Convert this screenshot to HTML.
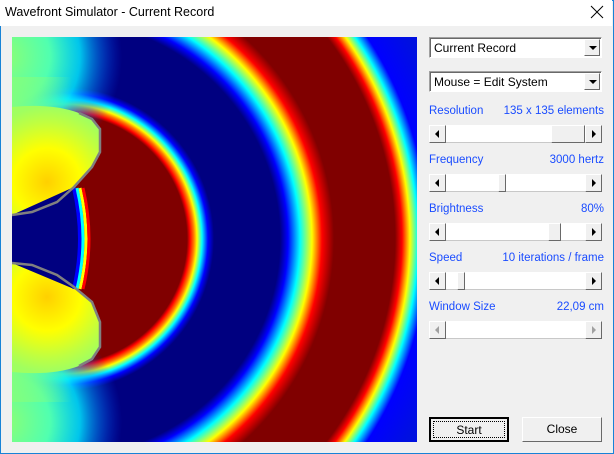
<!DOCTYPE html>
<html><head><meta charset="utf-8"><style>
*{margin:0;padding:0;box-sizing:border-box}
body{width:614px;height:454px;background:#f0f0f0;font-family:"Liberation Sans",sans-serif;font-size:12px;position:relative;overflow:hidden}
.win{position:absolute;left:0;top:0;width:614px;height:454px;border:1px solid #1883d7;background:#f0f0f0}
.title{position:absolute;left:0;top:0;width:612px;height:26px;background:#fff}
.title span{position:absolute;left:5px;top:5px;font-size:12.5px;color:#000}
.x{position:absolute;left:590px;top:5px}
.abs{position:absolute}
.combo{position:absolute;left:429px;width:173px;height:21px;background:#fff;border:1px solid;border-color:#a0a0a0 #fff #fff #a0a0a0;box-shadow:inset 1px 1px 0 #696969}
.combo span{position:absolute;left:4px;top:3px;font-size:12px}
.dd{position:absolute;right:1px;top:1px;width:16px;height:17px;background:#f0f0f0;border:1px solid;border-color:#fff #696969 #696969 #fff}
.dd:after{content:"";position:absolute;left:4px;top:6px;border-left:4px solid transparent;border-right:4px solid transparent;border-top:4px solid #000}
.lbl{position:absolute;left:429px;color:#1a4cff;font-size:11.5px}
.val{position:absolute;right:10px;color:#1a4cff;font-size:11.5px}
.sb{position:absolute;left:429px;width:173px;height:18px;background:#fff;border-bottom:1px solid #c8c8c8}
.btn{position:absolute;top:0;width:17px;height:18px;background:#f0f0f0;border:1px solid;border-color:#fff #696969 #696969 #fff}
.bl{left:0}.br{right:0}
.bl:after{content:"";position:absolute;left:5px;top:4px;border-top:4px solid transparent;border-bottom:4px solid transparent;border-right:4px solid #000}
.br:after{content:"";position:absolute;left:6px;top:4px;border-top:4px solid transparent;border-bottom:4px solid transparent;border-left:4px solid #000}
.dis:after{border-right-color:#a0a0a0;border-left-color:#a0a0a0}
.th{position:absolute;top:0;height:18px;background:#f0f0f0;border:1px solid;border-color:#fff #696969 #696969 #fff}
.pb{position:absolute;top:417px;height:25px;background:#f0f0f0;border:1px solid;border-color:#fff #696969 #696969 #fff;text-align:center;line-height:22px;font-size:12px}
</style></head><body>
<div class="win"></div>
<div class="title"><span>Wavefront Simulator - Current Record</span>
<svg class="x" width="14" height="14" viewBox="0 0 14 14"><path d="M1 1L13 13M13 1L1 13" stroke="#000" stroke-width="1"/></svg></div>

<svg class="abs" style="left:12px;top:37px" width="405" height="405" viewBox="0 0 405 405">
<defs>
<radialGradient id="w" gradientUnits="userSpaceOnUse" cx="50" cy="202" r="400">
<stop offset="0" stop-color="#800000"/><stop offset=".3125" stop-color="#800000"/>
<stop offset=".32" stop-color="#ff0000"/><stop offset=".33" stop-color="#ff8000"/>
<stop offset=".3375" stop-color="#ffff00"/><stop offset=".35" stop-color="#00ffff"/>
<stop offset=".365" stop-color="#0000ff"/><stop offset=".38" stop-color="#000080"/>
<stop offset=".545" stop-color="#000080"/><stop offset=".565" stop-color="#0000ff"/>
<stop offset=".595" stop-color="#00ffff"/><stop offset=".625" stop-color="#ffff00"/>
<stop offset=".65" stop-color="#ff0000"/><stop offset=".68" stop-color="#800000"/>
<stop offset=".8325" stop-color="#800000"/><stop offset=".85" stop-color="#ff0000"/>
<stop offset=".87" stop-color="#ffff00"/><stop offset=".89" stop-color="#00ffff"/>
<stop offset=".915" stop-color="#0000ff"/><stop offset="1" stop-color="#0010e0"/>
</radialGradient>
<radialGradient id="c1" gradientUnits="userSpaceOnUse" cx="-10" cy="20" r="120">
<stop offset="0" stop-color="#90ff70"/><stop offset=".4" stop-color="#50ffb0"/><stop offset=".65" stop-color="#00e8ff" stop-opacity=".85"/><stop offset=".85" stop-color="#0080ff" stop-opacity=".4"/><stop offset="1" stop-color="#0040ff" stop-opacity="0"/>
</radialGradient>
<radialGradient id="c2" gradientUnits="userSpaceOnUse" cx="-10" cy="385" r="120">
<stop offset="0" stop-color="#90ff70"/><stop offset=".4" stop-color="#50ffb0"/><stop offset=".65" stop-color="#00e8ff" stop-opacity=".85"/><stop offset=".85" stop-color="#0080ff" stop-opacity=".4"/><stop offset="1" stop-color="#0040ff" stop-opacity="0"/>
</radialGradient>
<radialGradient id="y1" gradientUnits="userSpaceOnUse" cx="35" cy="145" r="75">
<stop offset="0" stop-color="#ffd000"/><stop offset=".45" stop-color="#ffff00"/><stop offset=".8" stop-color="#c0ff40"/><stop offset="1" stop-color="#a0ff60"/>
</radialGradient>
<radialGradient id="y2" gradientUnits="userSpaceOnUse" cx="35" cy="260" r="75">
<stop offset="0" stop-color="#ffd000"/><stop offset=".45" stop-color="#ffff00"/><stop offset=".8" stop-color="#c0ff40"/><stop offset="1" stop-color="#a0ff60"/>
</radialGradient>
<linearGradient id="lg" x1="0" y1="0" x2="1" y2="0">
<stop offset="0" stop-color="#80ff80"/><stop offset="1" stop-color="#80ff80" stop-opacity="0"/>
</linearGradient>
</defs>
<rect width="405" height="405" fill="url(#w)"/>
<rect x="0" y="0" width="405" height="405" fill="url(#c1)"/>
<rect x="0" y="0" width="405" height="405" fill="url(#c2)"/>
<rect x="0" y="40" width="60" height="50" fill="url(#lg)"/>
<rect x="0" y="315" width="60" height="50" fill="url(#lg)"/>
<path d="M0,70 Q40,66 67,76 L80,82 L88,92 L88,115 L80,130 L62,150 L45,165 L20,175 L0,178Z" fill="url(#y1)"/>
<path d="M0,335 Q40,339 67,329 L80,322 L88,310 L88,285 L80,265 L62,250 L45,238 L20,228 L0,226Z" fill="url(#y2)"/>
<path d="M0,178 L62,150 Q74,202 62,252 L0,226Z" fill="#000080"/>
<path d="M62,151 Q74,202 62,252" stroke="#0000ff" stroke-width="4" fill="none"/>
<path d="M65,151 Q77,202 65,252" stroke="#00ffff" stroke-width="3" fill="none"/>
<path d="M68,151 Q80,202 68,252" stroke="#ffff00" stroke-width="3" fill="none"/>
<path d="M71,151 Q83,202 71,252" stroke="#ff0000" stroke-width="3" fill="none"/>
<path d="M67,76 L80,82 L88,92 L88,115 L80,130 L62,150 L45,165 L20,175 L0,178" stroke="#808080" stroke-width="2.5" fill="none"/>
<path d="M67,329 L80,322 L88,310 L88,285 L80,265 L62,250 L45,238 L20,228 L0,226" stroke="#808080" stroke-width="2.5" fill="none"/>
</svg>

<div class="combo" style="top:37px"><span>Current Record</span><div class="dd"></div></div>
<div class="combo" style="top:71px"><span>Mouse = Edit System</span><div class="dd"></div></div>

<div class="lbl" style="top:105px">Resolution</div><div class="val" style="top:105px">135 x 135 elements</div>
<div class="sb" style="top:125px"><div class="btn bl"></div><div class="th" style="left:122px;width:34px"></div><div class="btn br"></div></div>

<div class="lbl" style="top:154px">Frequency</div><div class="val" style="top:154px">3000 hertz</div>
<div class="sb" style="top:174px"><div class="btn bl"></div><div class="th" style="left:69px;width:8px"></div><div class="btn br"></div></div>

<div class="lbl" style="top:203px">Brightness</div><div class="val" style="top:203px">80%</div>
<div class="sb" style="top:223px"><div class="btn bl"></div><div class="th" style="left:119px;width:13px"></div><div class="btn br"></div></div>

<div class="lbl" style="top:252px">Speed</div><div class="val" style="top:252px">10 iterations / frame</div>
<div class="sb" style="top:272px"><div class="btn bl"></div><div class="th" style="left:28px;width:8px"></div><div class="btn br"></div></div>

<div class="lbl" style="top:301px">Window Size</div><div class="val" style="top:301px">22,09 cm</div>
<div class="sb" style="top:321px"><div class="btn bl dis"></div><div class="btn br dis"></div></div>

<div class="pb" style="left:429px;width:80px;border:2px solid #000;"><div style="position:absolute;left:2px;top:2px;right:2px;bottom:2px;border:1px dotted #000"></div>Start</div>
<div class="pb" style="left:522px;width:80px">Close</div>
</body></html>
